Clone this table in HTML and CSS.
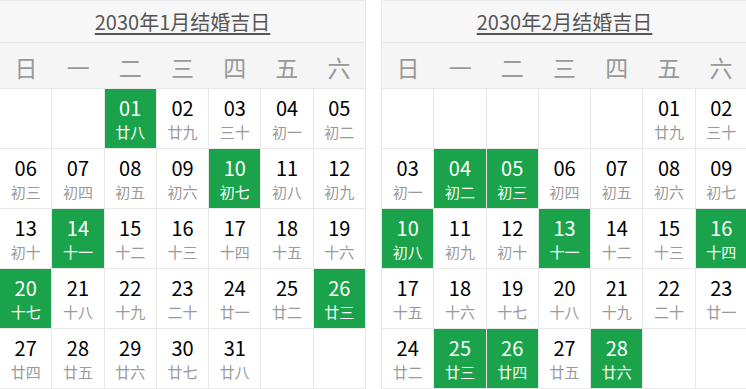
FILE: index.html
```html
<!DOCTYPE html>
<html lang="zh-CN">
<head>
<meta charset="utf-8">
<title>结婚吉日</title>
<link rel="stylesheet" href="styles.css">
</head>
<body>
<div class="wrap">
  <div class="cal">
    <div class="title"><a class="title-link">2030年1月结婚吉日</a></div>
    <div class="week">
      <div class="wd">日</div><div class="wd">一</div><div class="wd">二</div><div class="wd">三</div><div class="wd">四</div><div class="wd">五</div><div class="wd">六</div>
    </div>
    <div class="days">
      <div class="day empty"></div>
      <div class="day empty"></div>
      <div class="day good"><div class="num">01</div><div class="lunar">廿八</div></div>
      <div class="day"><div class="num">02</div><div class="lunar">廿九</div></div>
      <div class="day"><div class="num">03</div><div class="lunar">三十</div></div>
      <div class="day"><div class="num">04</div><div class="lunar">初一</div></div>
      <div class="day"><div class="num">05</div><div class="lunar">初二</div></div>

      <div class="day"><div class="num">06</div><div class="lunar">初三</div></div>
      <div class="day"><div class="num">07</div><div class="lunar">初四</div></div>
      <div class="day"><div class="num">08</div><div class="lunar">初五</div></div>
      <div class="day"><div class="num">09</div><div class="lunar">初六</div></div>
      <div class="day good"><div class="num">10</div><div class="lunar">初七</div></div>
      <div class="day"><div class="num">11</div><div class="lunar">初八</div></div>
      <div class="day"><div class="num">12</div><div class="lunar">初九</div></div>

      <div class="day"><div class="num">13</div><div class="lunar">初十</div></div>
      <div class="day good"><div class="num">14</div><div class="lunar">十一</div></div>
      <div class="day"><div class="num">15</div><div class="lunar">十二</div></div>
      <div class="day"><div class="num">16</div><div class="lunar">十三</div></div>
      <div class="day"><div class="num">17</div><div class="lunar">十四</div></div>
      <div class="day"><div class="num">18</div><div class="lunar">十五</div></div>
      <div class="day"><div class="num">19</div><div class="lunar">十六</div></div>

      <div class="day good"><div class="num">20</div><div class="lunar">十七</div></div>
      <div class="day"><div class="num">21</div><div class="lunar">十八</div></div>
      <div class="day"><div class="num">22</div><div class="lunar">十九</div></div>
      <div class="day"><div class="num">23</div><div class="lunar">二十</div></div>
      <div class="day"><div class="num">24</div><div class="lunar">廿一</div></div>
      <div class="day"><div class="num">25</div><div class="lunar">廿二</div></div>
      <div class="day good"><div class="num">26</div><div class="lunar">廿三</div></div>

      <div class="day"><div class="num">27</div><div class="lunar">廿四</div></div>
      <div class="day"><div class="num">28</div><div class="lunar">廿五</div></div>
      <div class="day"><div class="num">29</div><div class="lunar">廿六</div></div>
      <div class="day"><div class="num">30</div><div class="lunar">廿七</div></div>
      <div class="day"><div class="num">31</div><div class="lunar">廿八</div></div>
      <div class="day empty"></div>
      <div class="day empty"></div>
    </div>
  </div>

  <div class="cal">
    <div class="title"><a class="title-link">2030年2月结婚吉日</a></div>
    <div class="week">
      <div class="wd">日</div><div class="wd">一</div><div class="wd">二</div><div class="wd">三</div><div class="wd">四</div><div class="wd">五</div><div class="wd">六</div>
    </div>
    <div class="days">
      <div class="day empty"></div>
      <div class="day empty"></div>
      <div class="day empty"></div>
      <div class="day empty"></div>
      <div class="day empty"></div>
      <div class="day"><div class="num">01</div><div class="lunar">廿九</div></div>
      <div class="day"><div class="num">02</div><div class="lunar">三十</div></div>

      <div class="day"><div class="num">03</div><div class="lunar">初一</div></div>
      <div class="day good"><div class="num">04</div><div class="lunar">初二</div></div>
      <div class="day good"><div class="num">05</div><div class="lunar">初三</div></div>
      <div class="day"><div class="num">06</div><div class="lunar">初四</div></div>
      <div class="day"><div class="num">07</div><div class="lunar">初五</div></div>
      <div class="day"><div class="num">08</div><div class="lunar">初六</div></div>
      <div class="day"><div class="num">09</div><div class="lunar">初七</div></div>

      <div class="day good"><div class="num">10</div><div class="lunar">初八</div></div>
      <div class="day"><div class="num">11</div><div class="lunar">初九</div></div>
      <div class="day"><div class="num">12</div><div class="lunar">初十</div></div>
      <div class="day good"><div class="num">13</div><div class="lunar">十一</div></div>
      <div class="day"><div class="num">14</div><div class="lunar">十二</div></div>
      <div class="day"><div class="num">15</div><div class="lunar">十三</div></div>
      <div class="day good"><div class="num">16</div><div class="lunar">十四</div></div>

      <div class="day"><div class="num">17</div><div class="lunar">十五</div></div>
      <div class="day"><div class="num">18</div><div class="lunar">十六</div></div>
      <div class="day"><div class="num">19</div><div class="lunar">十七</div></div>
      <div class="day"><div class="num">20</div><div class="lunar">十八</div></div>
      <div class="day"><div class="num">21</div><div class="lunar">十九</div></div>
      <div class="day"><div class="num">22</div><div class="lunar">二十</div></div>
      <div class="day"><div class="num">23</div><div class="lunar">廿一</div></div>

      <div class="day"><div class="num">24</div><div class="lunar">廿二</div></div>
      <div class="day good"><div class="num">25</div><div class="lunar">廿三</div></div>
      <div class="day good"><div class="num">26</div><div class="lunar">廿四</div></div>
      <div class="day"><div class="num">27</div><div class="lunar">廿五</div></div>
      <div class="day good"><div class="num">28</div><div class="lunar">廿六</div></div>
      <div class="day empty"></div>
      <div class="day empty"></div>
    </div>
  </div>
</div>
</body>
</html>
```
FILE: styles.css
```css
html, body {
  margin: 0;
  padding: 0;
  overflow: hidden;
  background: #fff;
}
body {
  font-family: "Noto Sans CJK SC", "Noto Sans", sans-serif;
}
.wrap {
  display: flex;
  gap: 15px;
  margin-left: -1px;
  align-items: flex-start;
}
.cal {
  flex: 0 0 367px;
  width: 367px;
  box-sizing: border-box;
  border-left: 1px solid #e8e8e8;
  border-top: 1px solid #ececec;
}
.title {
  height: 41px;
  background: #f7f7f7;
  border-right: 1px solid #e8e8e8;
  border-bottom: 1px solid #e8e8e8;
  text-align: center;
  font-size: 20px;
  line-height: 41px;
}
.title-link {
  color: #555;
  text-decoration: underline;
  text-underline-offset: 3px;
}
.week {
  display: grid;
  grid-template-columns: repeat(7, 1fr);
  background: #f5f5f5;
  border-right: 1px solid #e8e8e8;
  border-bottom: 1px solid #e8e8e8;
}
.wd {
  height: 45px;
  line-height: 48px;
  text-align: center;
  font-size: 23px;
  color: #999;
}
.days {
  display: grid;
  grid-template-columns: repeat(7, 1fr);
}
.day {
  height: 59px;
  border-right: 1px solid #e8e8e8;
  border-bottom: 1px solid #e8e8e8;
  text-align: center;
  box-sizing: content-box;
  padding: 0;
}
.num {
  padding-top: 6px;
  font-size: 20px;
  line-height: 25px;
  color: #000;
}
.lunar {
  margin-top: 1px;
  font-size: 15px;
  line-height: 22px;
  color: #999;
}
.good {
  background: #1aa34a;
}
.good .num,
.good .lunar {
  color: #fff;
}
```
